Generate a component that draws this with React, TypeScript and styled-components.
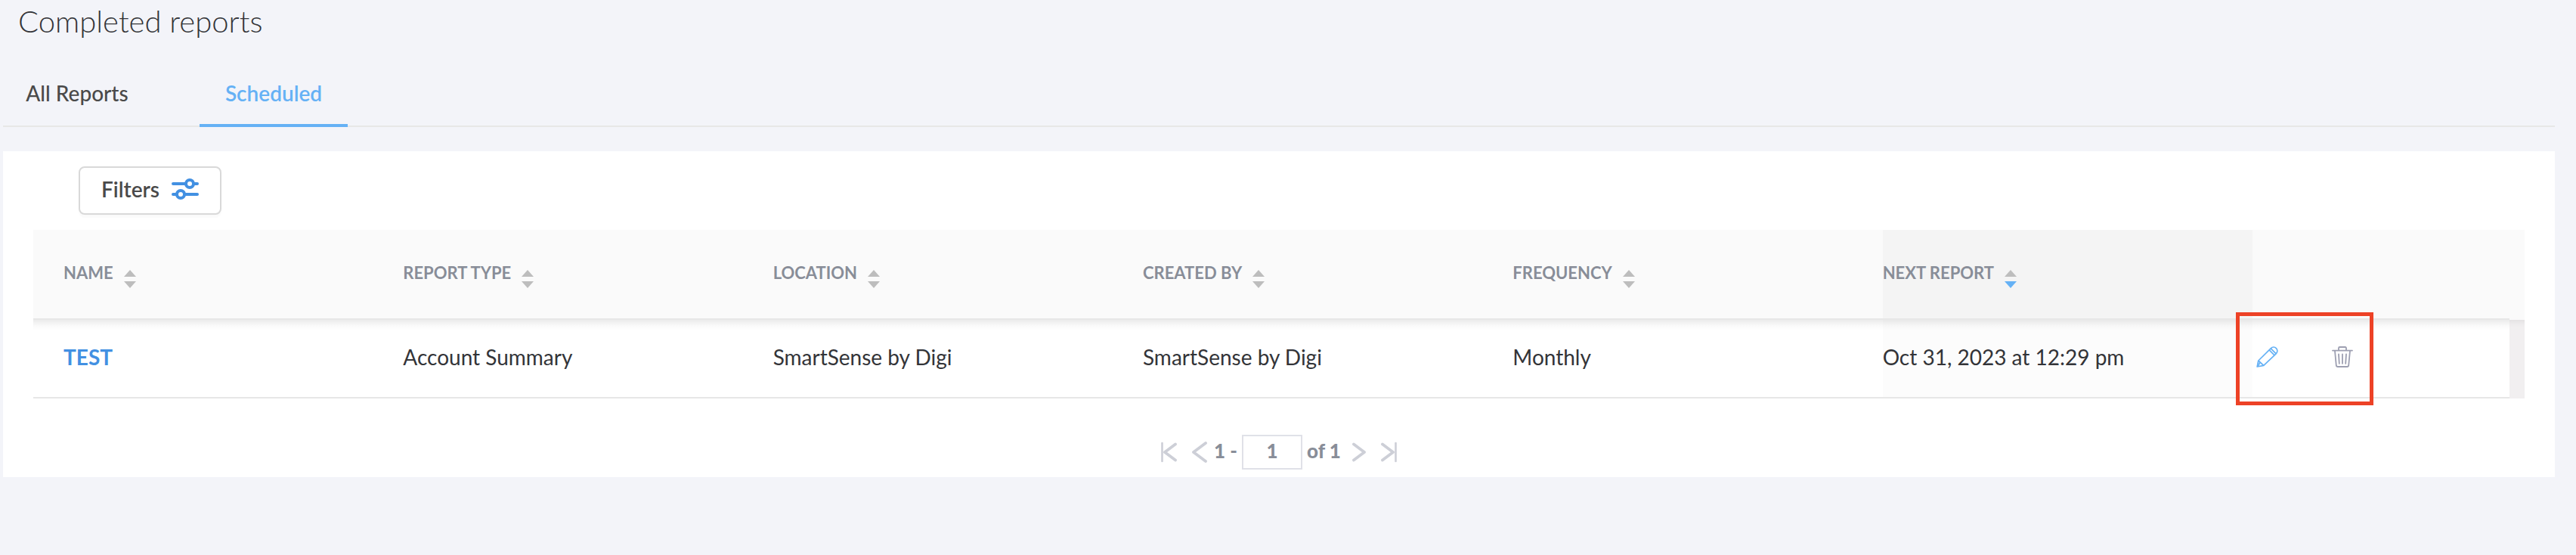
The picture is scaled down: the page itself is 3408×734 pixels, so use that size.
import React, { useState } from 'react';
import styled, { createGlobalStyle } from 'styled-components';

const colors = {
  page: '#f3f4f9',
  text: '#333438',
  tab: '#4a4a4a',
  accent: '#65b1f5',
  link: '#4290e2',
  muted: '#888d98',
  line: '#e7e7e7',
  arrow: '#bdbdbd',
  pager: '#cdcfd7',
};

const GlobalStyle = createGlobalStyle`
  *, *::before, *::after { box-sizing: border-box; }
  body {
    margin: 0;
    background: ${colors.page};
    color: ${colors.text};
    font-family: Lato, "Liberation Sans", sans-serif;
    font-size: 28px;
    line-height: 34px;
  }
  button, input { font: inherit; color: inherit; }
`;

const Page = styled.main`
  padding: 4px 28px 28px 4px;
`;

const Title = styled.h1`
  margin: 0;
  padding-left: 20px;
  font-size: 40px;
  font-weight: 300;
  line-height: 48px;
`;

const Tabs = styled.div`
  display: flex;
  gap: 64px;
  margin-top: 36px;
  margin-bottom: 32px;
  box-shadow: inset 0 -2px ${colors.line};
`;

const Tab = styled.button<{ $active: boolean }>`
  min-width: 196px;
  padding: 18px 0 24px;
  border: 0;
  border-bottom: 4px solid ${(p) => (p.$active ? colors.accent : 'transparent')};
  background: none;
  color: ${(p) => (p.$active ? colors.accent : colors.tab)};
  font-weight: ${(p) => (p.$active ? 600 : 500)};
  cursor: pointer;
`;

const Card = styled.section`
  padding: 20px 40px 10px;
  background: #fff;
`;

const FilterButton = styled.button`
  display: flex;
  align-items: center;
  gap: 16px;
  height: 64px;
  margin: 0 0 20px 60px;
  padding: 0 28px 4px;
  border: 2px solid #d9d9d9;
  border-radius: 8px;
  background: #fff;
  box-shadow: 0 4px 2px rgba(0, 0, 0, 0.02);
  color: ${colors.tab};
  font-weight: 600;
  cursor: pointer;
`;

const Table = styled.table`
  width: 100%;
  table-layout: fixed;
  border-collapse: separate;
  border-spacing: 0;
`;

const ActionsCol = styled.col`
  width: 340px;
`;

const GutterCol = styled.col`
  width: 20px;
`;

const HeadCell = styled.th<{ $sorted?: boolean; $first?: boolean }>`
  height: 119px;
  padding: 44px 0 0 ${(p) => (p.$first ? 40 : 0)}px;
  border-bottom: 2px solid ${colors.line};
  background: ${(p) => (p.$sorted ? '#f4f4f4' : '#fafafa')};
  text-align: left;
  vertical-align: top;
`;

const HeadGutter = styled.td`
  background: #fafafa;
`;

const SortButton = styled.button`
  display: flex;
  align-items: flex-start;
  gap: 14px;
  padding: 0;
  border: 0;
  background: none;
  color: ${colors.muted};
  font-size: 22px;
  font-weight: 700;
  line-height: 26px;
  white-space: nowrap;
  cursor: pointer;

  svg { margin-top: 9px; }
`;

const BodyRow = styled.tr`
  background: linear-gradient(rgba(0, 0, 0, 0.08), rgba(0, 0, 0, 0.02) 8px, transparent 14px);
`;

const Cell = styled.td<{ $sorted?: boolean; $first?: boolean }>`
  height: 104px;
  padding: 0 0 4px ${(p) => (p.$first ? 40 : 0)}px;
  border-bottom: 2px solid ${colors.line};
  background: ${(p) => (p.$sorted ? 'rgba(0, 0, 0, 0.012)' : 'transparent')};
  white-space: nowrap;
`;

const BodyGutter = styled.td`
  background: #f1eff0;
  box-shadow: inset 0 10px 8px -8px rgba(0, 0, 0, 0.08);
`;

const NameLink = styled.a`
  color: ${colors.link};
  font-weight: 700;
  text-decoration: none;
`;

const Actions = styled.div`
  position: relative;
  display: flex;
  gap: 71px;
  padding-left: 5px;
`;

const IconButton = styled.button<{ $color: string }>`
  display: flex;
  padding: 0;
  border: 0;
  background: none;
  color: ${(p) => p.$color};
  cursor: pointer;
`;

const Highlight = styled.span`
  position: absolute;
  left: -22px;
  top: -45px;
  width: 182px;
  height: 123px;
  border: 5px solid #ed4226;
  outline: 1px solid rgba(237, 66, 38, 0.4);
  outline-offset: -1px;
  pointer-events: none;
`;

const Pager = styled.nav`
  display: flex;
  align-items: center;
  justify-content: center;
  margin-top: 48px;
  color: ${colors.muted};
  font-size: 26px;
  font-weight: 900;
  line-height: 32px;
`;

const PagerGroup = styled.div`
  display: flex;
  align-items: center;
  gap: 20px;
`;

const PagerText = styled.span<{ $end?: boolean }>`
  padding: ${(p) => (p.$end ? '0 15px 4px 6px' : '0 6px 4px 9px')};
`;

const PageInput = styled.input`
  width: 80px;
  height: 46px;
  padding: 0 0 4px;
  border: 2px solid #e0e1e8;
  border-radius: 0;
  background: #fff;
  text-align: center;
`;

const SortIcon = ({ active }: { active?: boolean }) => (
  <svg width="16" height="24" viewBox="0 0 16 24" aria-hidden="true">
    <path d="M8 0l8 9H0z" fill={colors.arrow} />
    <path d="M8 24l8-9H0z" fill={active ? colors.accent : colors.arrow} />
  </svg>
);

const FiltersIcon = () => (
  <svg width="36" height="28" viewBox="0 0 36 28" fill="none" stroke="currentColor" strokeWidth="4" strokeLinecap="round" aria-hidden="true" color={colors.link}>
    <path d="M2 7h16M30 7h4M2 21h4M18 21h16" />
    <circle cx="24" cy="7" r="5" />
    <circle cx="12" cy="21" r="5" />
  </svg>
);

const PencilIcon = () => (
  <svg width="29" height="28" viewBox="0 0 29 28" fill="none" stroke="currentColor" strokeWidth="1.7" strokeLinejoin="round" aria-hidden="true">
    <path d="M1.2 27L2.8 19 19.4 2.6a4.9 4.9 0 0 1 7 7L9.8 25.4z" />
    <path d="M2.8 19l7 6.4M16.9 4.6l7.2 7.2M19.2 2.8l7 7M4.9 21.2l-2.4 5" />
  </svg>
);

const TrashIcon = () => (
  <svg width="28" height="28" viewBox="0 0 28 28" fill="none" stroke="currentColor" strokeWidth="1.8" strokeLinecap="round" strokeLinejoin="round" aria-hidden="true">
    <path d="M1 5.6h26M9 5.4V2.4q0-1.4 1.4-1.4h7.2Q19 1 19 2.4v3" />
    <path d="M4 6l1.8 19.2Q6 27 7.8 27h12.4q1.8 0 2-1.8L24 6" />
    <path d="M9 10.4l.8 12.4M14 10.4v12.4M19 10.4l-.8 12.4" />
  </svg>
);

const Chevron = ({ direction, small, bar }: { direction: 'left' | 'right'; small?: boolean; bar?: boolean }) => {
  const width = bar ? 21 : small ? 18 : 20;
  const inset = small ? 3.5 : 2;
  return (
    <svg width={width} height="28" viewBox={`0 0 ${width} 28`} fill="none" stroke={colors.pager} strokeLinecap="round" strokeLinejoin="round" aria-hidden="true">
      <g transform={direction === 'right' ? `translate(${width} 0) scale(-1 1)` : undefined}>
        {bar && <path d="M1.5 2v24" strokeWidth="2.6" />}
        <path d={`M${width - 2} ${inset}L${bar ? 5 : 2} 14l${width - (bar ? 7 : 4)} ${14 - inset}`} strokeWidth="3.8" />
      </g>
    </svg>
  );
};

const columns = ['NAME', 'REPORT TYPE', 'LOCATION', 'CREATED BY', 'FREQUENCY', 'NEXT REPORT'];
const tabs = ['All Reports', 'Scheduled'];
const reports = [
  { name: 'TEST', cells: ['Account Summary', 'SmartSense by Digi', 'SmartSense by Digi', 'Monthly', 'Oct 31, 2023 at 12:29 pm'] },
];

export default function App() {
  const [tab, setTab] = useState('Scheduled');
  const [sorted, setSorted] = useState('NEXT REPORT');
  const [page, setPage] = useState('1');

  return (
    <>
      <GlobalStyle />
      <Page>
        <Title>Completed reports</Title>
        <Tabs role="tablist">
          {tabs.map((name) => (
            <Tab key={name} role="tab" aria-selected={tab === name} $active={tab === name} onClick={() => setTab(name)}>
              {name}
            </Tab>
          ))}
        </Tabs>
        <Card>
          <FilterButton type="button">
            Filters
            <FiltersIcon />
          </FilterButton>
          <Table>
            <colgroup>
              {columns.map((name) => (
                <col key={name} />
              ))}
              <ActionsCol />
              <GutterCol />
            </colgroup>
            <thead>
              <tr>
                {columns.map((name, i) => (
                  <HeadCell key={name} scope="col" $first={i === 0} $sorted={sorted === name}>
                    <SortButton type="button" onClick={() => setSorted(name)}>
                      {name}
                      <SortIcon active={sorted === name} />
                    </SortButton>
                  </HeadCell>
                ))}
                <HeadCell as="td" />
                <HeadGutter />
              </tr>
            </thead>
            <tbody>
              {reports.map((report) => (
                <BodyRow key={report.name}>
                  <Cell $first>
                    <NameLink href="#report">{report.name}</NameLink>
                  </Cell>
                  {report.cells.map((value, i) => (
                    <Cell key={columns[i + 1]} $sorted={sorted === columns[i + 1]}>
                      {value}
                    </Cell>
                  ))}
                  <Cell>
                    <Actions>
                      <IconButton type="button" aria-label="Edit report" $color={colors.accent}>
                        <PencilIcon />
                      </IconButton>
                      <IconButton type="button" aria-label="Delete report" $color="#9d9fb1">
                        <TrashIcon />
                      </IconButton>
                      <Highlight />
                    </Actions>
                  </Cell>
                  <BodyGutter />
                </BodyRow>
              ))}
            </tbody>
          </Table>
          <Pager aria-label="Pagination">
            <PagerGroup>
              <IconButton type="button" aria-label="First page" $color={colors.pager}>
                <Chevron direction="left" bar small />
              </IconButton>
              <IconButton type="button" aria-label="Previous page" $color={colors.pager}>
                <Chevron direction="left" />
              </IconButton>
            </PagerGroup>
            <PagerText>1 -</PagerText>
            <PageInput aria-label="Page number" value={page} onChange={(e) => setPage(e.target.value)} />
            <PagerText $end>of 1</PagerText>
            <PagerGroup>
              <IconButton type="button" aria-label="Next page" $color={colors.pager}>
                <Chevron direction="right" small />
              </IconButton>
              <IconButton type="button" aria-label="Last page" $color={colors.pager}>
                <Chevron direction="right" bar small />
              </IconButton>
            </PagerGroup>
          </Pager>
        </Card>
      </Page>
    </>
  );
}
